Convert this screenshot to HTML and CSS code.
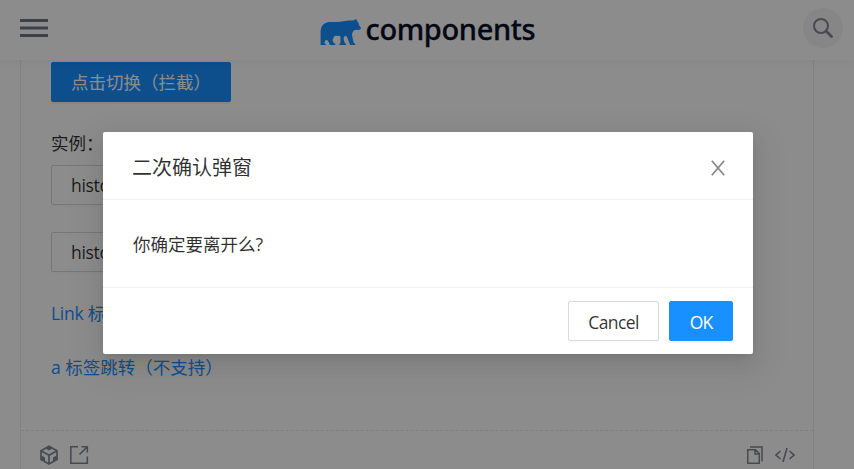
FILE: index.html
```html
<!DOCTYPE html>
<html lang="zh-CN">
<head>
<meta charset="utf-8">
<title>components</title>
<link rel="stylesheet" href="styles.css">
</head>
<body>
<header class="navbar">
  <svg class="menu" viewBox="0 0 28 18"><path d="M0 1.500h28M0 9h28M0 16.500h28" stroke="currentColor" stroke-width="2.800"/></svg>
  <div class="brand">
    <svg class="bear" viewBox="0 0 41 27"><path d="M.6 26V12C1.200 6 4.800 3.300 9.500 3c5.500-.2 9.500.5 14-.7C27.500 1.200 31 1.600 34 1.300L35 .2l1.600.2.3 1.700c1.200.7 1.800 2.300 2.100 3.900l2 3-1 1.800-5.700.1c-2 1.800-2.600 4-2.100 6 .5 2.800 1 5.100 1.600 7l1.400.7V26h-5.100l-2.800-7.500-1-1.500-2.300.4-.4 2.500 1.100 4 1.300.8V26h-6.700v-1.100l1.200-1-.2-6.900-5.500-.2-2.300 4 .9 3 1.900.9V26H9.800l-.8-2.500-1.600-2.200-1.800-.2-1.200 2.300.4 1.300 1.100.3v1z" fill="currentColor"/></svg>
    <span class="brand-name">components</span>
  </div>
  <div class="search">
    <svg viewBox="0 0 20 20" fill="none" stroke="currentColor"><circle cx="8" cy="8" r="7" stroke-width="2"/><path d="M13 13l5.500 5.500" stroke-width="2.800" stroke-linecap="round"/></svg>
  </div>
</header>
<main class="demo">
  <div class="demo-body">
    <button class="btn primary switch">点击切换（拦截）</button>
    <p class="label">实例：</p>
    <button class="btn history">history.push</button>
    <button class="btn history second">history.replace</button>
    <a class="link"><span class="latin">Link</span> 标签跳转</a>
    <a class="link">a 标签跳转（不支持）</a>
  </div>
  <footer class="actions">
    <svg viewBox="0 0 20 20" fill="none" stroke="currentColor"><path d="M10 1.200l8 4.500v8.700l-8 4.600-8-4.600V5.700zM2 5.700l8 4.500 8-4.500M10 10.200V19" stroke-width="1.700"/><path d="M6 3.200l4-2.400 4 2.400-4 2.300zM2 10.300l4 2.200V17l-4-2.500zM18 10.300l-4 2.200V17l4-2.500z" fill="currentColor" stroke="none"/></svg>
    <svg viewBox="0 0 20 20" fill="none" stroke="currentColor" stroke-width="1.600"><path d="M9 1.800H1.800v16.500h16.500V11.500M12.500 1.800h5.800v5.700M18 2l-7.500 7.500"/></svg>
    <span class="spacer"></span>
    <svg viewBox="0 0 20 20" fill="none" stroke="currentColor" stroke-width="1.500"><path d="M2.800 4.700h7.700l3.800 3.800v9.700H2.800zM10 4.700V9h4.300M5 2h12v14.300"/></svg>
    <svg class="code" viewBox="0 0 20 20" fill="none" stroke="currentColor" stroke-width="1.600"><path d="M5.500 6L1 10l4.500 4M14.500 6l4.500 4-4.500 4M12 3L8 17"/></svg>
  </footer>
</main>
<div class="mask">
  <section class="modal">
    <div class="modal-head">
      <h2>二次确认弹窗</h2>
      <svg class="close" viewBox="0 0 14 16"><path d="M.8.8l12.400 14.400M13.200.8L.8 15.200" stroke="currentColor" stroke-width="1.700"/></svg>
    </div>
    <div class="modal-body">你确定要离开么?</div>
    <div class="modal-foot">
      <button class="btn cancel">Cancel</button>
      <button class="btn primary ok">OK</button>
    </div>
  </section>
</div>
</body>
</html>
```
FILE: styles.css
```css
* { box-sizing: border-box; }
body {
  margin: 0;
  height: 469px;
  overflow: hidden;
  background: #fff;
  color: rgba(0, 0, 0, .82);
  font: 17.5px/27.5px "Open Sans", "Noto Sans CJK SC", sans-serif;
}
.navbar {
  position: relative;
  display: flex;
  align-items: center;
  justify-content: space-between;
  height: 60px;
  padding: 0 11px 4px 20px;
  background: #fff;
  box-shadow: 0 2px 10px rgba(0, 0, 0, .05);
}
.menu { width: 28px; height: 18px; color: #717484; }
.brand { display: flex; align-items: center; height: 40px; margin-left: 4px; color: #1890ff; }
.bear { width: 41px; height: 27px; margin: 8px 5px 0 0; }
.brand-name {
  width: 170px;
  color: #080e29;
  font: 500 29px/40px "Noto Sans", sans-serif;
  -webkit-text-stroke: .3px #080e29;
  letter-spacing: -.35px;
  margin-top: 2px;
}
.search {
  display: flex;
  align-items: center;
  justify-content: center;
  width: 40px;
  height: 40px;
  border-radius: 50%;
  background: #f4f4f6;
  color: #858794;
}
.search svg { width: 20px; height: 20px; }
.demo {
  width: 794px;
  height: 430px;
  margin-left: 20px;
  border: solid #ebedf1;
  border-width: 0 1px;
}
.demo-body {
  display: flex;
  flex-direction: column;
  align-items: flex-start;
  height: 371px;
  padding: 2px 30px 0;
  border-bottom: 1px dashed #e6e8ed;
}
.btn {
  flex: none;
  height: 40px;
  padding: 2px 19px 0;
  border: 1px solid #d9d9d9;
  border-radius: 2px;
  background: #fff;
  color: inherit;
  font: inherit;
  white-space: nowrap;
  box-shadow: 0 2px 0 rgba(0, 0, 0, .016);
}
.primary { border-color: #1890ff; background: #1890ff; color: #fff; box-shadow: 0 2px 0 rgba(0, 0, 0, .045); }
.switch { width: 180px; }
.history, .latin { letter-spacing: -.3px; }
.label { margin: 27px 0 8px; line-height: 28px; }
.second { margin: 27px 0; }
.link { margin-bottom: 26px; line-height: 28px; color: #1890ff; }
.actions { display: flex; align-items: center; gap: 10px; height: 48px; padding: 0 18px; color: #858794; }
.actions svg { width: 20px; height: 20px; }
.spacer { flex: 1; }
.mask {
  position: absolute;
  inset: 0;
  padding: 132px 0 0 103px;
  background: rgba(0, 0, 0, .45);
}
.modal {
  display: flex;
  flex-direction: column;
  width: 650px;
  height: 222px;
  border-radius: 2px;
  background: #fff;
  box-shadow: 0 4px 8px -5px rgba(0, 0, 0, .12), 0 8px 20px rgba(0, 0, 0, .08), 0 11px 35px 10px rgba(0, 0, 0, .05);
}
.modal-head {
  display: flex;
  flex: none;
  align-items: center;
  justify-content: space-between;
  height: 68px;
  padding: 4px 28px 0 29px;
  border-bottom: 1px solid #f0f0f0;
}
h2 { margin: 0; font: 400 20px/28px "Open Sans", "Noto Sans CJK SC", sans-serif; }
.close { width: 14px; height: 16px; color: #858585; }
.modal-body { flex: 1; padding: 31px 30px 0; }
.modal-foot { display: flex; flex: none; justify-content: flex-end; gap: 10px; height: 67px; padding: 13px 20px; border-top: 1px solid #f0f0f0; }
.cancel { width: 91px; padding: 4px 0 0; letter-spacing: -.6px; }
.ok { width: 64px; padding: 4px 0 0; letter-spacing: -.8px; }
```
